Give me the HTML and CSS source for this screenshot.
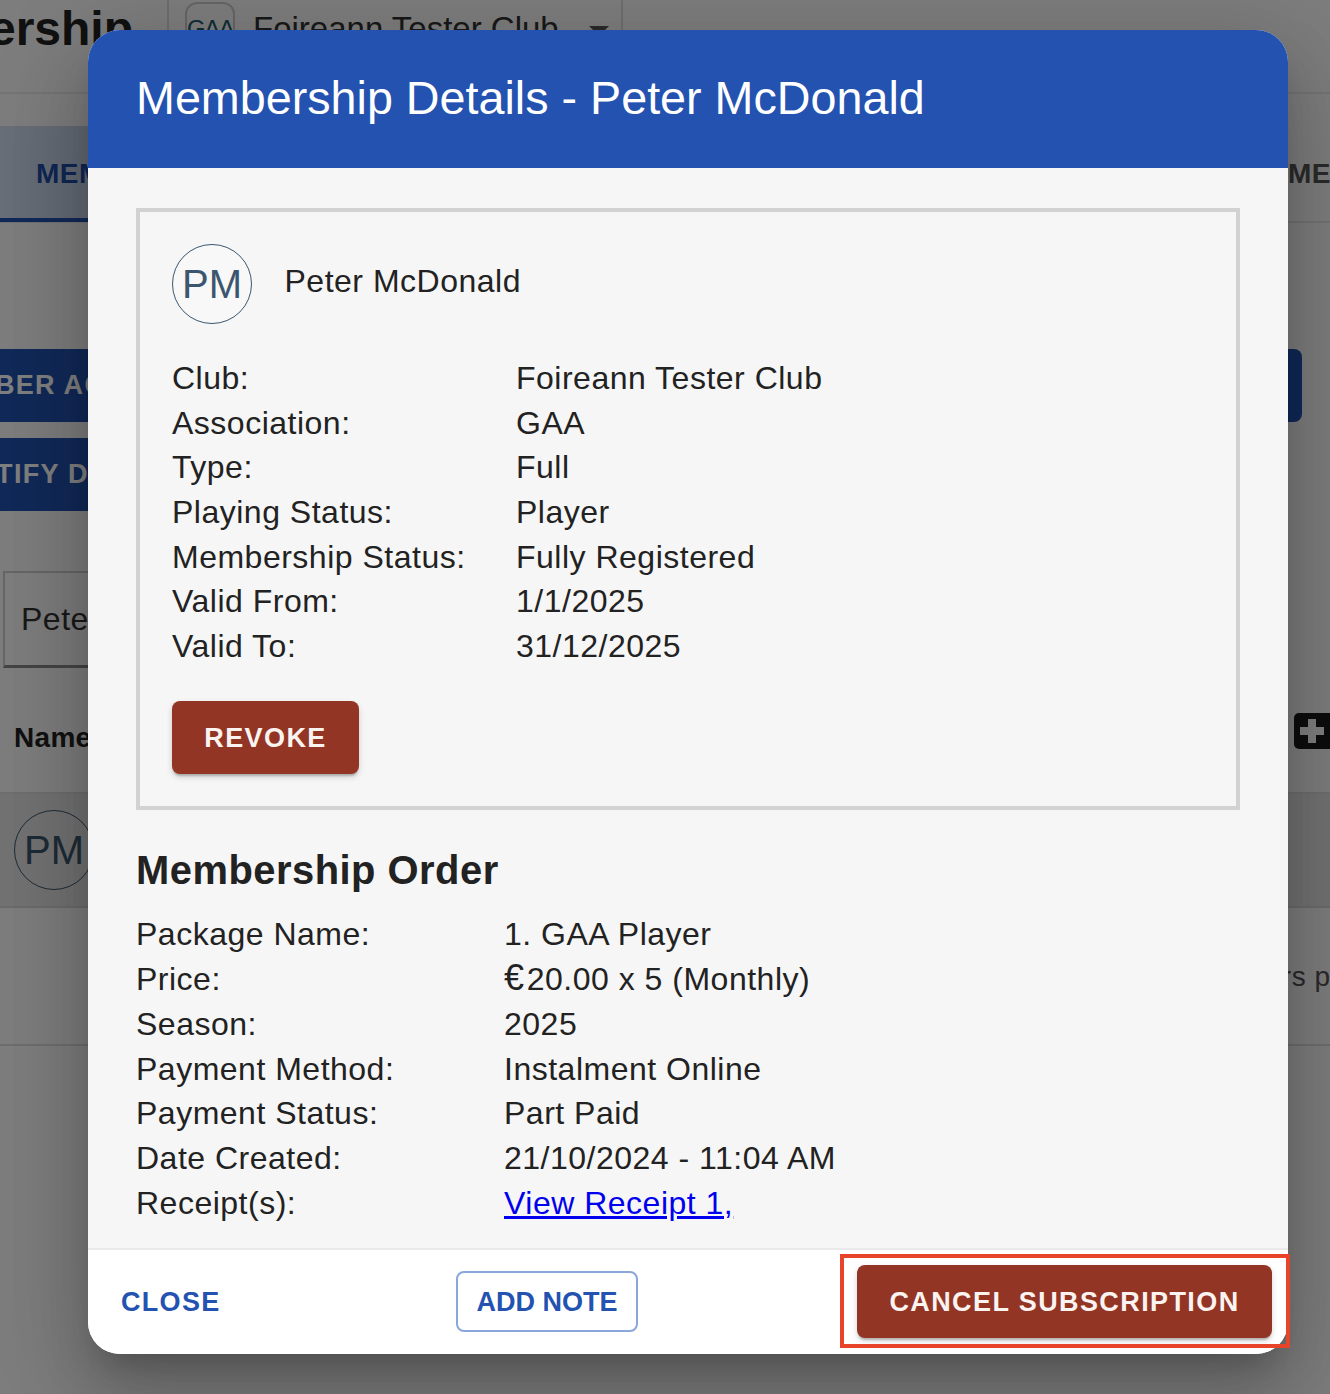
FILE: index.html
```html
<!DOCTYPE html>
<html lang="en">
<head>
<meta charset="utf-8">
<title>Membership Details</title>
<link rel="stylesheet" href="styles.css">
</head>
<body>
<div class="page">
  <header class="topbar">
    <div class="page-title"><h1>Membership</h1></div>
    <div class="club-picker">
      <span class="club-logo">GAA</span>
      <span class="club-name">Foireann Tester Club</span>
      <span class="club-arrow"></span>
    </div>
  </header>
  <nav class="tabs">
    <div class="tab tab-active">MEMBERS</div>
    <div class="tab tab-other">ME</div>
  </nav>
  <div class="actions">
    <div class="action-left">
      <div class="action-btn"><span class="action-one">MEMBER ACTIONS</span></div>
      <div class="action-btn"><span class="action-two">NOTIFY DUE</span></div>
    </div>
    <div class="action-right"></div>
  </div>
  <div class="search"><span>Peter</span></div>
  <div class="table-head">
    <strong>Name</strong>
    <span class="plus-box"><svg viewBox="0 0 36 36" class="plus-icon"><path d="M14 6h8v8h8v8h-8v8h-8v-8H6v-8h8z"/></svg></span>
  </div>
  <div class="table-row"><span class="avatar avatar-bg">PM</span></div>
  <div class="table-note"><span>Members paid</span></div>
</div>

<div class="overlay"></div>

<section class="modal">
  <header class="modal-head"><h2>Membership Details - Peter McDonald</h2></header>
  <div class="modal-body">
    <div class="member-box">
      <div class="member-id">
        <span class="avatar">PM</span>
        <span class="member-name">Peter McDonald</span>
      </div>
      <dl class="details details-member">
        <dt>Club:</dt><dd>Foireann Tester Club</dd>
        <dt>Association:</dt><dd>GAA</dd>
        <dt>Type:</dt><dd>Full</dd>
        <dt>Playing Status:</dt><dd>Player</dd>
        <dt>Membership Status:</dt><dd>Fully Registered</dd>
        <dt>Valid From:</dt><dd>1/1/2025</dd>
        <dt>Valid To:</dt><dd>31/12/2025</dd>
      </dl>
      <button class="btn btn-red btn-revoke">REVOKE</button>
    </div>
    <h3 class="order-title">Membership Order</h3>
    <dl class="details details-order">
      <dt>Package Name:</dt><dd>1. GAA Player</dd>
      <dt>Price:</dt><dd><span class="euro">€</span>20.00 x 5 (Monthly)</dd>
      <dt>Season:</dt><dd>2025</dd>
      <dt>Payment Method:</dt><dd>Instalment Online</dd>
      <dt>Payment Status:</dt><dd>Part Paid</dd>
      <dt>Date Created:</dt><dd>21/10/2024 - 11:04 AM</dd>
      <dt>Receipt(s):</dt><dd><a href="#receipt">View Receipt 1,</a></dd>
    </dl>
  </div>
  <footer class="modal-foot">
    <button class="btn btn-text">CLOSE</button>
    <button class="btn btn-outline">ADD NOTE</button>
    <button class="btn btn-red btn-cancel">CANCEL SUBSCRIPTION</button>
  </footer>
</section>
<div class="highlight"></div>
</body>
</html>
```

FILE: styles.css
```css
* { box-sizing: border-box; }
html, body { margin: 0; padding: 0; }
body {
  width: 1330px;
  height: 1394px;
  position: relative;
  overflow: hidden;
  background: #fafafa;
  font-family: "Liberation Sans", Arial, sans-serif;
  color: #222;
}

/* background page */
.page { height: 1394px; }
.topbar {
  height: 94px;
  display: flex;
  border-bottom: 2px solid #e8e8e8;
}
.page-title {
  width: 167px;
  flex: none;
  display: flex;
  justify-content: flex-end;
  overflow: hidden;
  padding-right: 34px;
}
.page-title h1 {
  margin: 2px 0 0;
  font-size: 48px;
  line-height: 54px;
  font-weight: 700;
  color: #222;
}
.club-picker {
  width: 456px;
  height: 94px;
  flex: none;
  display: flex;
  align-items: flex-start;
  padding-top: 2px;
  padding-left: 16px;
  border-left: 2px solid #ddd;
  border-right: 2px solid #ddd;
}
.club-logo {
  width: 50px;
  height: 50px;
  border: 2px solid #ccc;
  border-radius: 12px;
  font-size: 24px;
  line-height: 50px;
  text-align: center;
  color: #1d5a70;
  flex: none;
  letter-spacing: -1.5px;
}
.club-name {
  margin-left: 18px;
  font-size: 33px;
  line-height: 54px;
  color: #333;
  white-space: nowrap;
}
.club-arrow {
  margin: 24px 0 0 30px;
  border: 10px solid transparent;
  border-top-color: #555;
  border-bottom: 0;
}
.tabs {
  margin-top: 32px;
  height: 97px;
  display: flex;
  justify-content: space-between;
  border-bottom: 2px solid #e4e4e4;
}
.tab {
  font-size: 28px;
  font-weight: 700;
  line-height: 96px;
  height: 96px;
  letter-spacing: .5px;
}
.tab-active {
  width: 200px;
  padding-left: 36px;
  color: #1e4ea8;
  background: linear-gradient(90deg, #d2def2, #b6c4dc);
  border-bottom: 4px solid #2352b0;
}
.tab-other { color: #555; width: 42px; overflow: hidden; }
.actions {
  margin-top: 126px;
  display: flex;
  justify-content: space-between;
}
.action-left {
  display: flex;
  flex-direction: column;
  gap: 16px;
  width: 200px;
}
.action-btn {
  height: 73px;
  overflow: hidden;
  background: #2352b0;
  font-size: 27px;
  font-weight: 700;
  letter-spacing: 1.3px;
  line-height: 73px;
  color: #fff;
  white-space: nowrap;
}
.action-one { display: block; text-indent: -72px; }
.action-two { display: block; text-indent: -47px; }
.action-right {
  width: 100px;
  height: 73px;
  margin-right: 28px;
  background: #2352b0;
  border-radius: 0 8px 8px 0;
}
.search {
  margin: 60px 0 0 3px;
  width: 300px;
  height: 97px;
  padding-left: 16px;
  font-size: 32px;
  line-height: 92px;
  letter-spacing: .5px;
  border: 2px solid #ccc;
  border-bottom: 3px solid #888;
  color: #333;
}
.table-head {
  height: 126px;
  display: flex;
  justify-content: space-between;
  padding: 45px 0 0 14px;
  border-bottom: 2px solid #dcdcdc;
  font-size: 28px;
  line-height: 50px;
  letter-spacing: .3px;
  color: #222;
}
.plus-box {
  width: 36px;
  height: 36px;
  background: #1a1a1a;
  border-radius: 5px 0 0 5px;
}
.plus-icon { width: 36px; height: 36px; display: block; fill: #fff; }
.table-row {
  height: 114px;
  padding: 16px 0 0 14px;
  background: #e4e4e4;
  border-bottom: 2px solid #d6d6d6;
}
.table-note {
  height: 138px;
  border-bottom: 2px solid #dcdcdc;
  font-size: 28px;
  line-height: 138px;
  letter-spacing: .5px;
  color: #555;
  padding-left: 1186px;
  white-space: nowrap;
  overflow: hidden;
}

.avatar {
  width: 80px;
  height: 80px;
  display: block;
  flex: none;
  border: 1px solid #3b566e;
  border-radius: 50%;
  background: #f8f8f8;
  font-size: 40px;
  line-height: 78px;
  text-align: center;
  color: #3b566e;
}
.avatar-bg { background: transparent; }

.overlay {
  position: absolute;
  inset: 0;
  background: rgba(0, 0, 0, .5);
}

/* dialog */
.modal {
  position: absolute;
  left: 88px;
  top: 30px;
  width: 1200px;
  height: 1324px;
  display: flex;
  flex-direction: column;
  overflow: hidden;
  border-radius: 32px;
  background: #fff;
  box-shadow: 0 22px 30px -14px rgba(0,0,0,.2), 0 48px 76px 6px rgba(0,0,0,.14), 0 18px 92px 16px rgba(0,0,0,.12);
}
.modal-head {
  height: 138px;
  flex: none;
  padding: 0 48px;
  background: #2352b0;
}
.modal-head h2 {
  margin: 0;
  font-size: 46.7px;
  line-height: 136px;
  font-weight: 400;
  color: #fff;
  white-space: nowrap;
}
.modal-body {
  flex: 1;
  padding: 40px 48px 0;
  background: #f6f6f6;
  overflow: hidden;
}
.member-box {
  height: 602px;
  padding: 32px;
  border: 4px solid #d2d2d2;
}
.member-id {
  display: flex;
  align-items: flex-start;
  gap: 32.5px;
  height: 80px;
}
.member-name {
  font-size: 32px;
  line-height: 74px;
  letter-spacing: .5px;
}
.details {
  margin: 0;
  display: grid;
  font-size: 32px;
  line-height: 44.7px;
  letter-spacing: .5px;
}
.details dt, .details dd { margin: 0; white-space: nowrap; }
.details-member {
  grid-template-columns: 344px 1fr;
  margin-top: 31.9px;
}
.details-order {
  grid-template-columns: 368px 1fr;
  margin-top: 17.4px;
}
.details a { color: #0000ee; text-decoration: underline; }
.euro { font-size: 36px; letter-spacing: 2.7px; line-height: 1; }
.order-title {
  margin: 36px 0 0;
  font-size: 39.9px;
  line-height: 49px;
  font-weight: 700;
  letter-spacing: .5px;
}
.btn {
  font-family: "Liberation Sans", Arial, sans-serif;
  font-size: 27px;
  font-weight: 700;
  letter-spacing: 1.4px;
  border: 0;
  padding: 2px 0 0;
  background: transparent;
  white-space: nowrap;
}
.btn-red {
  background: #923525;
  color: #fbf3f0;
  border-radius: 8px;
  box-shadow: 0 3px 2px -1px rgba(0,0,0,.2), 0 3px 6px rgba(0,0,0,.16);
}
.btn-revoke {
  display: block;
  width: 187px;
  height: 73px;
  margin-top: 32px;
}
.modal-foot {
  height: 106px;
  flex: none;
  display: flex;
  align-items: center;
  justify-content: space-between;
  padding: 0 16px 2px 33px;
  background: #fff;
  border-top: 2px solid #eaeaea;
}
.btn-text { color: #2352b0; width: 116px; text-align: left; letter-spacing: 1.3px; }
.btn-outline {
  width: 182px;
  height: 61px;
  color: #2352b0;
  border: 2px solid #8ba6da;
  border-radius: 8px;
  background: #fff;
  letter-spacing: 0;
}
.btn-cancel { width: 415px; height: 73px; letter-spacing: 1.4px; }

.highlight {
  position: absolute;
  left: 840px;
  top: 1254px;
  width: 450px;
  height: 94px;
  border: 4px solid #e8442a;
}
```
